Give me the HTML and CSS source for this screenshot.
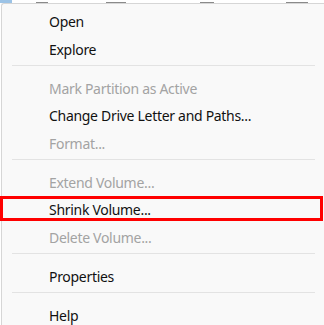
FILE: index.html
```html
<!DOCTYPE html>
<html>
<head>
<meta charset="utf-8">
<link rel="stylesheet" href="styles.css">
</head>
<body>
<div class="page">
  <div class="behind">
    <span class="frag blue" style="width:12px"></span>
    <span class="frag" style="margin-left:24px;width:12px"></span>
    <span class="frag" style="margin-left:58px;width:20px"></span>
    <span class="frag" style="margin-left:74px;width:14px"></span>
    <span class="frag" style="margin-left:72px;width:22px"></span>
  </div>
  <div class="menu">
    <div class="item">Open</div>
    <div class="item">Explore</div>
    <div class="sep"></div>
    <div class="item disabled">Mark Partition as Active</div>
    <div class="item">Change Drive Letter and Paths...</div>
    <div class="item disabled">Format...</div>
    <div class="sep"></div>
    <div class="item disabled">Extend Volume...</div>
    <div class="item">Shrink Volume...</div>
    <div class="item disabled">Delete Volume...</div>
    <div class="sep"></div>
    <div class="item">Properties</div>
    <div class="sep"></div>
    <div class="item">Help</div>
  </div>
  <div class="highlight"></div>
</div>
</body>
</html>
```
FILE: styles.css
```css
html, body {
  margin: 0;
  padding: 0;
  background: #ffffff;
  overflow: hidden;
}
.page {
  position: relative;
  width: 324px;
  height: 325px;
  overflow: hidden;
  font-family: "Noto Sans", "Open Sans", sans-serif;
}
.behind {
  display: flex;
  height: 3px;
  align-items: flex-end;
}
.frag {
  display: block;
  height: 1px;
  background: #8a8a8a;
}
.frag.blue {
  background: #9cc3e6;
  height: 3px;
}
.menu {
  margin-left: 1px;
  width: 340px;
  background: #f9f9f9;
  border-top: 1px solid #d6d6d6;
  border-left: 1px solid #d6d6d6;
  border-top-left-radius: 3px;
  padding-top: 4px;
  padding-bottom: 20px;
}
.item {
  height: 27.5px;
  display: flex;
  align-items: center;
  padding-left: 47px;
  font-size: 14px;
  letter-spacing: -0.3px;
  color: #111111;
  white-space: nowrap;
}
.item.disabled {
  color: #a3a3a3;
}
.sep {
  height: 1px;
  width: 303px;
  margin: 2px 0 8.5px 10px;
  background: #e3e3e3;
}
.highlight {
  position: absolute;
  left: 0;
  top: 196px;
  width: 323px;
  height: 25px;
  box-sizing: border-box;
  border: 3.5px solid #ff0000;
}
```
